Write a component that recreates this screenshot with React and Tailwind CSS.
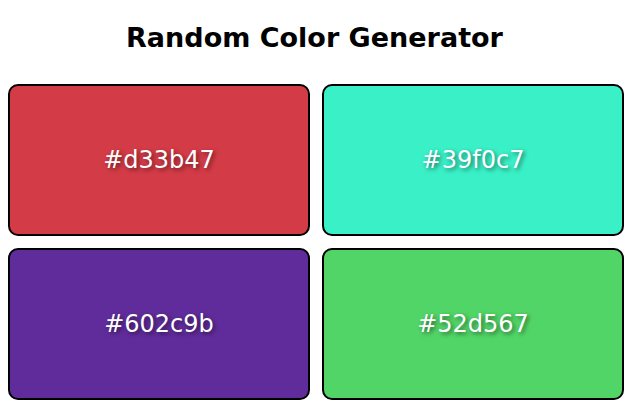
export default function App() {
  const colors = ["#d33b47", "#39f0c7", "#602c9b", "#52d567"];
  return (
    <div className="w-[629px] h-[400px] overflow-hidden bg-white">
      <h1 className="text-center font-bold text-[27px] leading-none pt-[24px] h-[84px] font-['DejaVu_Sans',sans-serif] text-black">
        Random Color Generator
      </h1>
      <div className="grid grid-cols-[302px_302px] gap-[12px] pl-[8px]">
        {colors.map((c) => (
          <div
            key={c}
            className="h-[152px] rounded-[10px] border-2 border-black flex items-center justify-center"
            style={{ backgroundColor: c }}
          >
            <span className="text-white text-[24px] font-medium font-['DejaVu_Sans',sans-serif] [text-shadow:2px_2px_4px_rgba(0,0,0,0.5)]">
              {c}
            </span>
          </div>
        ))}
      </div>
    </div>
  );
}
